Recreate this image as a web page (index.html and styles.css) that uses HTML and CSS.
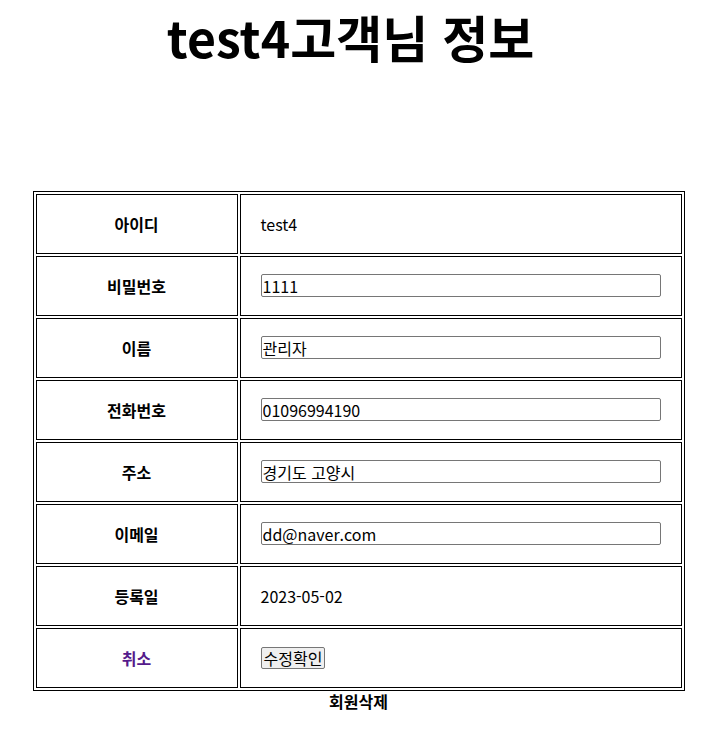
FILE: index.html
```html
<!DOCTYPE html>
<html lang="ko">
<head>
<meta charset="utf-8">
<title>test4고객님 정보</title>
<link rel="stylesheet" href="styles.css">
</head>
<body>
<h1 class="title">test4고객님 정보</h1>
<form class="info-form">
<table class="info-table">
  <tr><th>아이디</th><td>test4</td></tr>
  <tr><th>비밀번호</th><td><input class="field" type="text" value="1111"></td></tr>
  <tr><th>이름</th><td><input class="field" type="text" value="관리자"></td></tr>
  <tr><th>전화번호</th><td><input class="field" type="text" value="01096994190"></td></tr>
  <tr><th>주소</th><td><input class="field" type="text" value="경기도 고양시"></td></tr>
  <tr><th>이메일</th><td><input class="field" type="text" value="dd@naver.com"></td></tr>
  <tr><th>등록일</th><td>2023-05-02</td></tr>
  <tr><th><a class="cancel" href="#">취소</a></th><td><button class="btn" type="button">수정확인</button></td></tr>
</table>
</form>
<div class="delete">회원삭제</div>
</body>
</html>
```

FILE: styles.css
```css
html, body {
  background: #fff;
}
body {
  margin: 0 12px 8px 8px;
  font-family: "Noto Sans CJK KR", "Noto Sans", sans-serif;
  font-size: 16px;
  color: #000;
}
.title {
  margin: 0;
  text-align: center;
  font-size: 50px;
  line-height: 73px;
  font-weight: 700;
  padding-right: 16px;
}
.info-form {
  margin: 118px 0 0;
}
.info-table {
  box-sizing: border-box;
  width: 652px;
  margin: 0 auto;
  table-layout: fixed;
  border: 1px solid #000;
  border-collapse: separate;
  border-spacing: 2px;
}
.info-table th,
.info-table td {
  box-sizing: border-box;
  height: 60px;
  border: 1px solid #000;
  padding: 0 20px;
  line-height: 20px;
}
.info-table th {
  width: 202px;
  text-align: center;
  font-weight: 700;
}
.info-table td {
  width: 442px;
  text-align: left;
}
.field {
  box-sizing: border-box;
  width: 400px;
  height: 23px;
  margin: -1px 0 0;
  padding: 0 1px;
  border: 1px solid #767676;
  border-radius: 2px;
  font-family: "Noto Sans CJK KR", "Noto Sans", sans-serif;
  font-size: 16px;
  line-height: 19px;
  color: #000;
  display: block;
}
.cancel {
  color: #551a8b;
  text-decoration: none;
}
.btn {
  margin: 0;
  padding: 0 2px;
  height: 22px;
  border: 1px solid #767676;
  border-radius: 2px;
  background: #efefef;
  font-family: "Noto Sans CJK KR", "Noto Sans", sans-serif;
  font-size: 16px;
  line-height: 18px;
  color: #000;
}
.delete {
  text-align: center;
  font-weight: 700;
  line-height: 20px;
}
```
